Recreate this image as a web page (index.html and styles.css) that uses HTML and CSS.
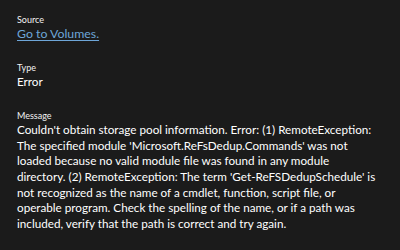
FILE: index.html
```html
<!DOCTYPE html>
<html>
<head>
<meta charset="utf-8">
<link rel="stylesheet" href="styles.css">
</head>
<body>
<div class="panel">
  <div class="field">
    <div class="label">Source</div>
    <a class="link" href="#">Go to Volumes.</a>
  </div>
  <div class="field">
    <div class="label">Type</div>
    <div class="value">Error</div>
  </div>
  <div class="field">
    <div class="label">Message</div>
    <div class="value msg">Couldn't obtain storage pool information. Error: (1) RemoteException:<br>The specified module 'Microsoft.ReFsDedup.Commands' was not<br>loaded because no valid module file was found in any module<br>directory. (2) RemoteException: The term 'Get-ReFSDedupSchedule' is<br>not recognized as the name of a cmdlet, function, script file, or<br>operable program. Check the spelling of the name, or if a path was<br>included, verify that the path is correct and try again.</div>
  </div>
</div>
</body>
</html>
```

FILE: styles.css
```css
html, body {
  margin: 0;
  padding: 0;
  background: #1b1b1b;
}
body {
  width: 400px;
  height: 250px;
  overflow: hidden;
  font-family: "Lato", "Noto Sans", sans-serif;
  color: #ffffff;
}
.panel {
  padding: 14px 4px 0 17px;
  display: flex;
  flex-direction: column;
  gap: 21px;
}
.field {
  display: flex;
  flex-direction: column;
}
.label {
  font-size: 9px;
  line-height: 11.5px;
  color: #f2f2f2;
}
.link {
  font-size: 12.3px;
  line-height: 15.7px;
  color: #6ea6d8;
  text-decoration: underline;
  text-underline-offset: 2px;
  align-self: flex-start;
}
.value {
  font-size: 11.7px;
  line-height: 15.7px;
}
.msg {
  white-space: nowrap;
}
```
